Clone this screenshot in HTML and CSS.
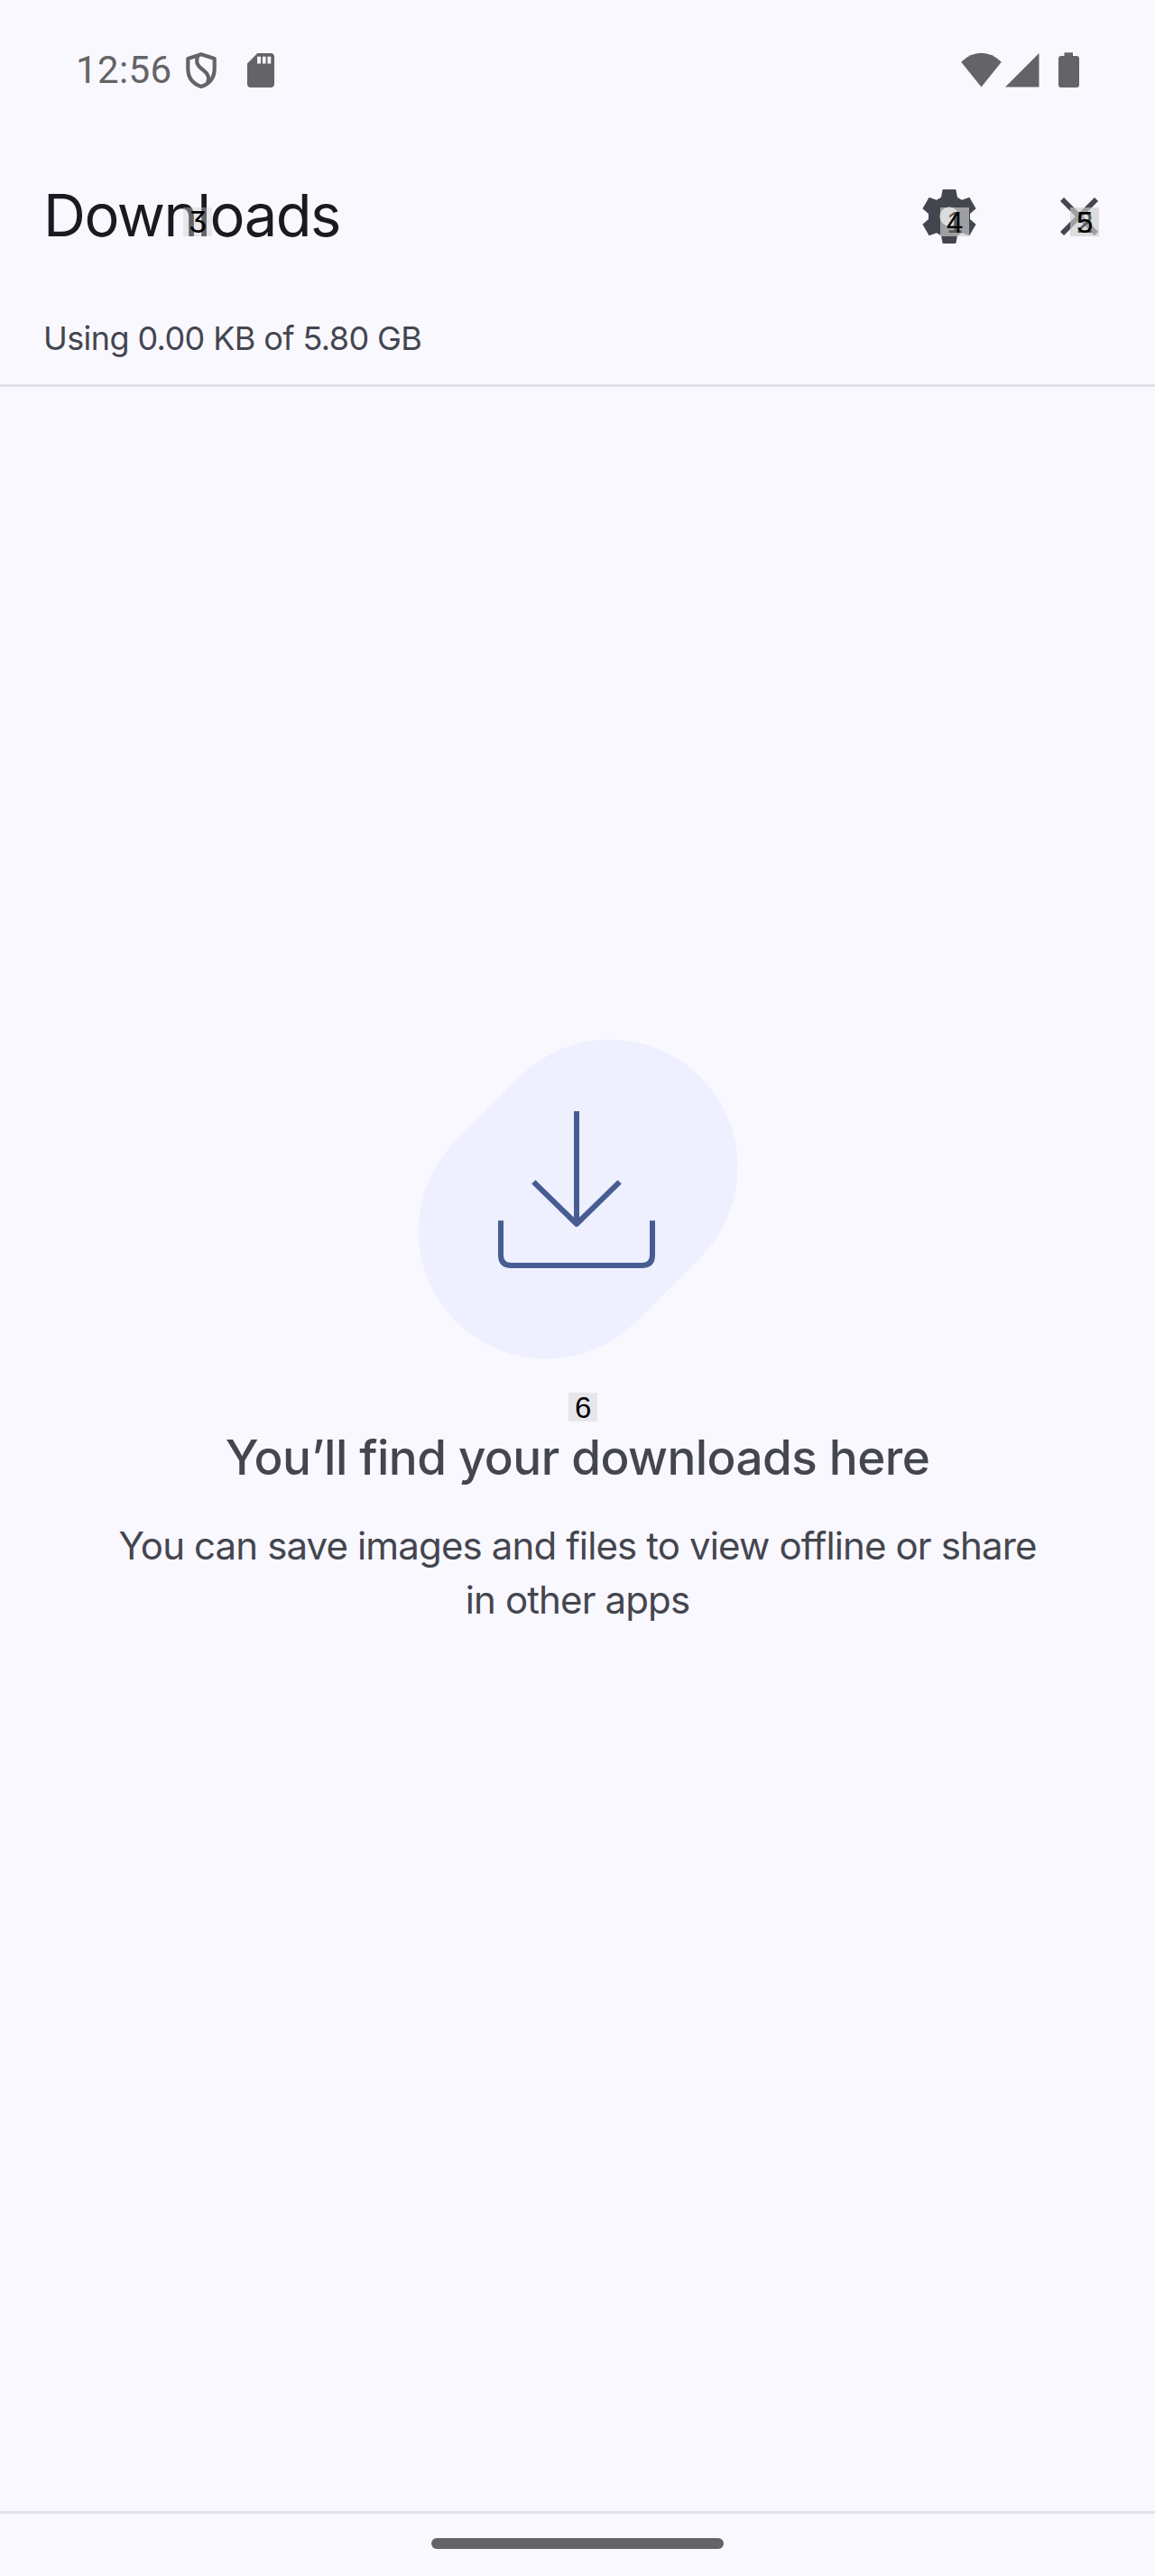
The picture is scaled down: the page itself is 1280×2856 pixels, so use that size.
FILE: index.html
```html
<!DOCTYPE html>
<html lang="en">
<head>
<meta charset="utf-8">
<title>Downloads</title>
<link rel="stylesheet" href="styles.css">
</head>
<body>
<div class="screen">
  <div class="status">
    <span class="clock">12:56</span>
    <svg class="shield" width="36" height="42" viewBox="0 0 36 42" fill="none" stroke="#646466" stroke-width="4.2" stroke-linejoin="round"><path d="M18 3.2 32.7 8v11C32.7 29 27 36 18 39 9 36 3.300 29 3.300 19V8Z"/><path d="M14.500 4.500C11 13 15 17 20 20.500 26 25 27.500 29 25 35"/></svg>
    <svg class="sd" width="30" height="38" viewBox="4 2 16 20" preserveAspectRatio="none" fill="#646466"><path d="M18 2h-8L4 8v12c0 1.100.9 2 2 2h12c1.100 0 2-.9 2-2V4c0-1.100-.9-2-2-2zm-6 6H9.900V4H12v4zm3 0h-2V4h2v4zm3 0h-2V4h2v4z"/></svg>
    <svg class="signals" width="132" height="40" viewBox="0 0 132 40" fill="#646466"><path d="M22.500 38.500.200 10.700Q10 .7 22.500.7T44.800 10.700Z"/><path d="M49 38.500 86.500 1v37.500Z"/><path d="M114.500.3h9.500V4h4q3 0 3 3v29q0 3-3 3h-17q-3 0-3-3V7q0-3 3-3h3.500Z"/></svg>
  </div>
  <header class="toolbar">
    <div class="title-wrap"><h1 class="title">Downloads</h1><span class="badge badge-title">3</span></div>
    <div class="action">
      <svg width="60" height="60" viewBox="-30 -30 60 60" fill="#44464f"><path fill-rule="evenodd" d="M-7.300-30H7.300L9-21.300 14-18.300 22.300-21.300 29.600-8.700 23-2.900V2.900L29.600 8.700 22.300 21.300 14 18.300 9 21.300 7.300 30H-7.300L-9 21.300-14 18.300-22.300 21.300-29.600 8.700-23 2.900V-2.900L-29.600-8.700-22.300-21.300-14-18.300-9-21.300ZM0-10.500a10.500 10.500 0 1 0 0 21 10.500 10.500 0 1 0 0-21Z"/></svg>
      <span class="badge">1</span><span class="badge">4</span>
    </div>
    <div class="action">
      <svg width="42" height="42" viewBox="0 0 42 42" stroke="#44464f" stroke-width="5.800"><path d="m2 2 38 38M40 2 2 40"/></svg>
      <span class="badge">2</span><span class="badge">5</span>
    </div>
  </header>
  <div class="storage">Using 0.00 KB of 5.80 GB</div>
  <main class="empty">
    <svg class="art" width="356" height="355" viewBox="462 1152 356 355" fill="none"><path d="M605.200 1365 676 1294" stroke="#eeefff" stroke-width="283" stroke-linecap="round"/><g stroke="#475d92" stroke-width="6"><path d="M639 1232v125"/><path d="m591.300 1310.300 47.700 46.700 47.700-46.700" stroke-linejoin="round"/><path d="M555 1353.300v38.200q0 11.500 11.500 11.500h145q11.500 0 11.500-11.500v-38.200"/></g></svg>
    <div class="heading-wrap"><span class="badge badge-heading">6</span><h2 class="heading">You’ll find your downloads here</h2></div>
    <p class="message">You can save images and files to view offline or share<br>in other apps</p>
  </main>
  <footer class="nav"><div class="handle"></div></footer>
</div>
</body>
</html>
```
FILE: styles.css
```css
* { box-sizing: border-box; margin: 0; }
body { background: #faf8ff; color: #44464f; font-family: Inter, "Open Sans", sans-serif; }
svg { display: block; flex: none; }
.screen { width: 1280px; height: 2856px; display: flex; flex-direction: column; overflow: hidden; }
.status { height: 156px; padding: 58px 83px 0 84px; display: flex; align-items: flex-start; color: #646466; }
.clock { font: 42px/42px Roboto, sans-serif; letter-spacing: .4px; width: 121px; margin-top: -1px; white-space: nowrap; }
.shield { margin-top: -1px; }
.sd { margin: 1px 0 0 33px; }
.signals { margin-left: auto; }
.toolbar { height: 168px; display: flex; align-items: center; padding: 0 12px 0 48px; }
.title-wrap { position: relative; margin-right: auto; padding-bottom: 3px; }
.title { font-size: 65px; line-height: 84px; font-weight: 400; letter-spacing: -1.5px; color: #1a1b21; white-space: nowrap; }
.action { position: relative; width: 144px; height: 144px; display: flex; align-items: center; justify-content: center; }
.badge { position: absolute; left: 62px; top: 62px; width: 32px; height: 32px; padding-left: 7px; text-align: left; background: rgba(204, 204, 204, .42); color: #000; font: 33px/34px "Liberation Sans", sans-serif; }
.badge-title { left: 155px; top: 33.5px; padding-left: 6px; font: 33px/33px Inter, sans-serif; font-feature-settings: "cv09"; }
.badge-heading { left: 630px; top: -36px; }
.storage { height: 105px; padding: 27px 48px 0; font-size: 36px; line-height: 48px; letter-spacing: -.6px; border-bottom: 3px solid #e1e2ec; white-space: nowrap; }
.empty { flex: 1; display: flex; flex-direction: column; align-items: center; padding-top: 723px; }
.heading-wrap { position: relative; width: 1280px; margin-top: 73px; text-align: center; }
.heading { font-size: 53px; line-height: 72px; font-weight: 500; letter-spacing: -.55px; white-space: nowrap; }
.message { margin-top: 32px; font-size: 42px; line-height: 60px; letter-spacing: -.87px; text-align: center; white-space: nowrap; }
.nav { height: 72px; border-top: 3px solid #e1e2ec; padding-top: 27px; }
.handle { width: 324px; height: 12px; margin: 0 auto; border-radius: 6px; background: #646466; }
```
